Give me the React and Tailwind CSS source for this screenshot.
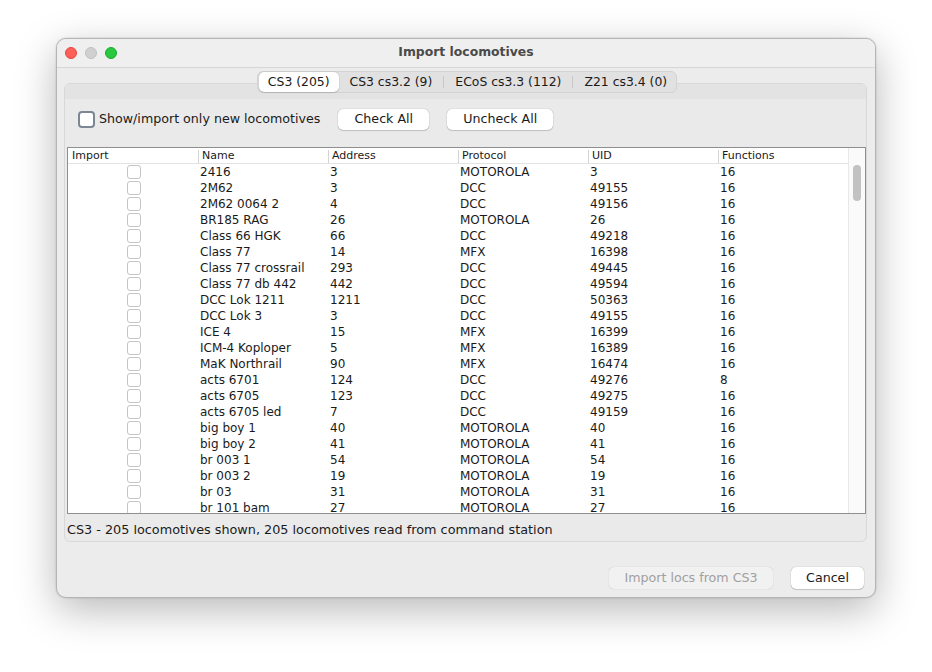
import React from "react";

const rows = [
  ["2416", "3", "MOTOROLA", "3", "16"],
  ["2M62", "3", "DCC", "49155", "16"],
  ["2M62 0064 2", "4", "DCC", "49156", "16"],
  ["BR185 RAG", "26", "MOTOROLA", "26", "16"],
  ["Class 66 HGK", "66", "DCC", "49218", "16"],
  ["Class 77", "14", "MFX", "16398", "16"],
  ["Class 77 crossrail", "293", "DCC", "49445", "16"],
  ["Class 77 db 442", "442", "DCC", "49594", "16"],
  ["DCC Lok 1211", "1211", "DCC", "50363", "16"],
  ["DCC Lok 3", "3", "DCC", "49155", "16"],
  ["ICE 4", "15", "MFX", "16399", "16"],
  ["ICM-4 Koploper", "5", "MFX", "16389", "16"],
  ["MaK Northrail", "90", "MFX", "16474", "16"],
  ["acts 6701", "124", "DCC", "49276", "8"],
  ["acts 6705", "123", "DCC", "49275", "16"],
  ["acts 6705 led", "7", "DCC", "49159", "16"],
  ["big boy 1", "40", "MOTOROLA", "40", "16"],
  ["big boy 2", "41", "MOTOROLA", "41", "16"],
  ["br 003 1", "54", "MOTOROLA", "54", "16"],
  ["br 003 2", "19", "MOTOROLA", "19", "16"],
  ["br 03", "31", "MOTOROLA", "31", "16"],
  ["br 101 bam", "27", "MOTOROLA", "27", "16"],
];

const headers = ["Import", "Name", "Address", "Protocol", "UID", "Functions"];
const tabs = ["CS3 (205)", "CS3 cs3.2 (9)", "ECoS cs3.3 (112)", "Z21 cs3.4 (0)"];

export default function App() {
  return (
    <div
      className="w-[932px] h-[672px] bg-white pl-[56px] pt-[38px] text-[#1a1a1a]"
      style={{ fontFamily: '"DejaVu Sans", "Noto Sans", sans-serif' }}
    >
      <div className="w-[820px] h-[560px] rounded-[10px] bg-[#ececec] border border-[#b5b5b5] shadow-[0_12px_40px_rgba(0,0,0,0.28),0_0_2px_rgba(0,0,0,0.2)] flex flex-col overflow-hidden">
        {/* Title bar */}
        <div className="h-[29px] shrink-0 flex items-center relative bg-[#efefef] border-b border-[#d6d6d6]">
          <div className="flex items-center gap-[8px] pl-[8px]">
            <div className="w-[12px] h-[12px] rounded-full bg-[#fe5f57] border border-[#e2463f]" />
            <div className="w-[12px] h-[12px] rounded-full bg-[#d0d0d0] border border-[#bfbfbf]" />
            <div className="w-[12px] h-[12px] rounded-full bg-[#28c840] border border-[#1aab29]" />
          </div>
          <div className="absolute inset-0 flex items-center justify-center pb-[2px] text-[12.4px] font-bold text-[#4a4a4a] pointer-events-none">
            Import locomotives
          </div>
        </div>

        {/* Tabs */}
        <div className="flex justify-center pt-[3px] relative z-10 pl-[2px]">
          <div className="flex items-center h-[22px] rounded-[6px] bg-[#e1e1e1] border border-[#d3d3d3] text-[12.4px] px-[1px]">
            {tabs.map((t, i) => (
              <React.Fragment key={t}>
                {i > 1 && <div className="w-px h-[12px] bg-[#c8c8c8]" />}
                <div
                  className={
                    i === 0
                      ? "h-[20px] px-[9px] flex items-center bg-white rounded-[5px] shadow-[0_0_1px_rgba(0,0,0,0.35),0_1px_1px_rgba(0,0,0,0.12)]"
                      : i === 3
                      ? "h-[20px] pl-[11px] pr-[8px] flex items-center"
                      : "h-[20px] pl-[11px] pr-[11px] flex items-center"
                  }
                >
                  {t}
                </div>
              </React.Fragment>
            ))}
          </div>
        </div>

        {/* Tab panel */}
        <div className="ml-[7px] mr-[8px] -mt-[10px] h-[459px] rounded-[6px] border border-[#d8d8d8] bg-[#eaeaea] flex flex-col overflow-hidden">
          <div className="h-[15px] shrink-0 bg-[#e3e3e3]" />
          <div className="h-[41px] shrink-0 flex items-center pl-[13px]">
            <div className="w-[17px] h-[17px] rounded-[4px] border-[2px] border-[#7d8794] bg-white" />
            <span className="ml-[4px] text-[12.65px]">Show/import only new locomotives</span>
            <button className="ml-[18px] w-[91px] h-[21px] rounded-[5px] bg-white text-[12.65px] shadow-[0_0_1px_rgba(0,0,0,0.4),0_1px_1px_rgba(0,0,0,0.15)]">
              Check All
            </button>
            <button className="ml-[18px] w-[106px] h-[21px] rounded-[5px] bg-white text-[12.65px] shadow-[0_0_1px_rgba(0,0,0,0.4),0_1px_1px_rgba(0,0,0,0.15)]">
              Uncheck All
            </button>
          </div>
          <div className="ml-[2px] mt-[7px] w-[799px] h-[367px] shrink-0 border border-[#8f8f8f] bg-white flex overflow-hidden">
            <div className="w-[780px] flex flex-col">
              <div className="h-[16px] shrink-0 flex border-b border-[#e3e3e3] text-[11px]">
                {headers.map((h, i) => (
                  <div key={h} className="w-[130px] flex items-center pt-[1px]">
                    {i > 0 && <div className="w-px h-[13px] bg-[#d4d4d4]" />}
                    <span className={i > 0 ? "pl-[3px]" : "pl-[4px]"}>{h}</span>
                  </div>
                ))}
              </div>
              {rows.map((r, idx) => (
                <div key={idx} className="h-[16px] shrink-0 flex items-center text-[12px] leading-[16px]">
                  <div className="w-[130px] flex justify-center pl-[1px]">
                    <div className="w-[14px] h-[14px] rounded-[3px] border border-[#c4c4c4] bg-white" />
                  </div>
                  {r.map((c, j) => (
                    <div key={j} className="w-[130px] pl-[2px] whitespace-nowrap">
                      {c}
                    </div>
                  ))}
                </div>
              ))}
            </div>
            <div className="w-[17px] shrink-0 bg-[#fafafa] border-l border-[#e8e8e8] flex justify-center pt-[17px]">
              <div className="w-[8px] h-[36px] rounded-full bg-[#c2c2c2]" />
            </div>
          </div>
          <div className="h-[26px] shrink-0 flex items-center pt-[6px] pl-[2px] text-[12.8px]">
            CS3 - 205 locomotives shown, 205 locomotives read from command station
          </div>
        </div>

        {/* Buttons */}
        <div className="flex justify-end items-center pr-[11px] mt-[25px]">
          <button className="w-[164px] h-[22px] rounded-[5px] bg-[#f1f1f1] text-[12.65px] text-[#a0a0a0] shadow-[0_0_1px_rgba(0,0,0,0.25)]">
            Import locs from CS3
          </button>
          <button className="ml-[18px] w-[73px] h-[22px] rounded-[5px] bg-white text-[12.65px] shadow-[0_0_1px_rgba(0,0,0,0.4),0_1px_1px_rgba(0,0,0,0.15)]">
            Cancel
          </button>
        </div>
      </div>
    </div>
  );
}
